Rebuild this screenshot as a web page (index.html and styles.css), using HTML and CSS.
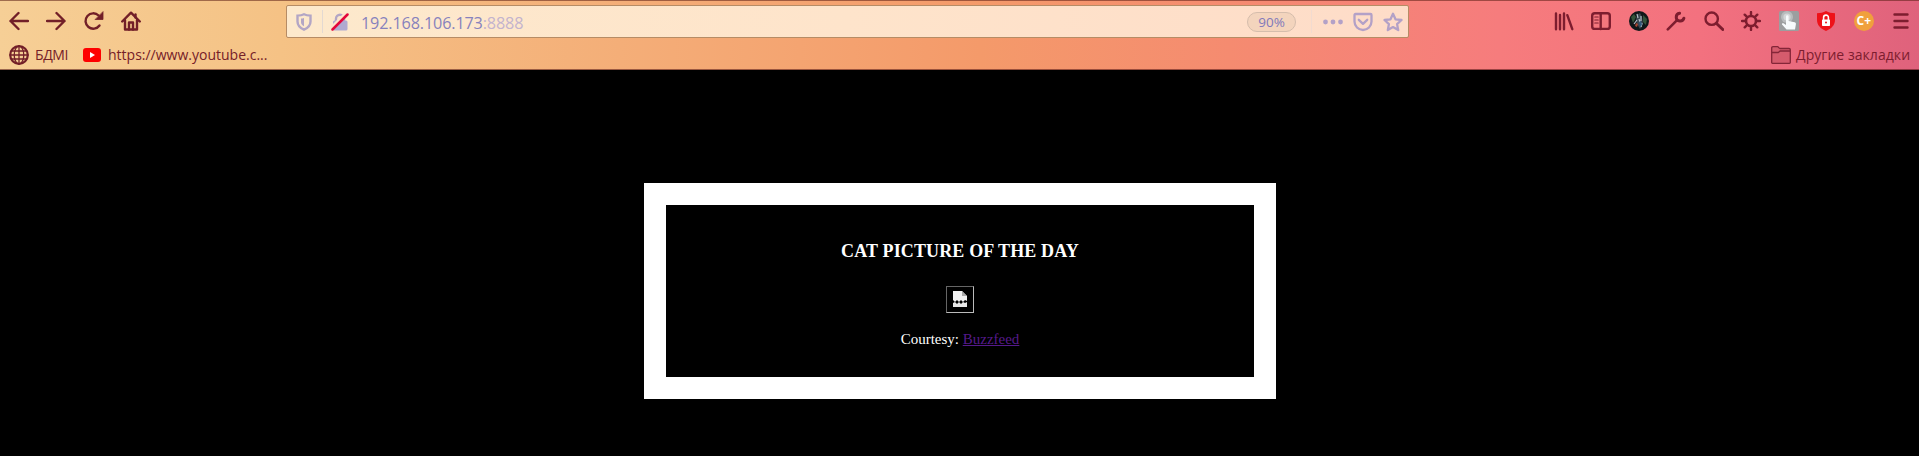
FILE: index.html
```html
<!DOCTYPE html>
<html lang="ru">
<head>
<meta charset="utf-8">
<title>Cat picture of the day</title>
<link rel="stylesheet" href="styles.css">
</head>
<body>
<header class="chrome">
  <div class="toolbar">
    <div class="buttons">
      <span class="btn"><svg class="icon line" viewBox="0 0 20 20"><path d="M19 10H1.500M9.500 2L1.500 10l8 8"/></svg></span>
      <span class="btn"><svg class="icon line" viewBox="0 0 20 20"><path d="M1 10h17.500M10.500 2l8 8-8 8"/></svg></span>
      <span class="btn"><svg class="icon line" viewBox="0 0 20 20"><path d="M15.500 14.500A7.700 7.700 0 1 1 14.600 4.500"/><path d="M19 1v7.500h-7.500z" class="solid"/></svg></span>
      <span class="btn"><svg class="icon line" viewBox="0 0 20 20"><path d="M1.200 10.500L10 1.700l8.800 8.800M4 9v9.500h12V9"/><path d="M8 18.500v-7h4v7" /><path d="M14.500 3.500v3"/></svg></span>
    </div>
    <div class="urlbar">
      <svg class="shield" viewBox="0 0 16 18"><path d="M8 1.300c2 1 4.300 1.300 6.500 1.300v5.900c0 4-2.700 6.500-6.500 8.200-3.800-1.700-6.500-4.200-6.500-8.200V2.600C3.700 2.600 6 2.300 8 1.300z" fill="none" stroke="#b3a6c5" stroke-width="2.400"/><path d="M8 5c-1 .4-2 .6-3 .6v3.600c0 1.800 1.200 3 3 4z" fill="#b3a6c5"/></svg>
      <span class="divider"></span>
      <svg class="lock" viewBox="0 0 18 18"><path d="M5 9V5.700a4 4 0 0 1 8 0V9" fill="none" stroke="#b3a6c5" stroke-width="2.400"/><rect x="2" y="7.500" width="14.500" height="10" rx="1.500" fill="#b0a9d0"/><path d="M0 15.500L15.500 0" stroke="#fde6cc" stroke-width="3.500"/><path d="M1.500 16.500l15-15" stroke="#e4063b" stroke-width="2.500" stroke-linecap="round"/></svg>
      <span class="address">192.168.106.173<span class="port">:8888</span></span>
      <span class="zoom">90%</span>
      <span class="divider faint"></span>
      <svg class="dots" viewBox="0 0 20 6"><circle cx="2.500" cy="3" r="2.400"/><circle cx="10" cy="3" r="2.400"/><circle cx="17.500" cy="3" r="2.400"/></svg>
      <svg class="page-action" viewBox="0 0 20 20"><path d="M2.500 2h15c.6 0 1 .4 1 1v6.500a8.500 8.500 0 0 1-17 0V3c0-.6.4-1 1-1z"/><path d="M5.800 7.800L10 11.800l4.200-4"/></svg>
      <svg class="page-action" viewBox="0 0 20 20"><path d="M10 1.800l2.500 5.500 6 .7-4.400 4.100 1.100 6-5.200-3-5.200 3 1.100-6L1.500 8l6-.7z"/></svg>
    </div>
    <div class="buttons extensions">
      <span class="btn"><svg class="icon line" viewBox="0 0 20 20"><path d="M2 2.500v15.800M6 4v14.300M10 2.500v15.800M13.300 4.200l5 14"/></svg></span>
      <span class="btn"><svg class="icon line" viewBox="0 0 20 20"><rect x="1.200" y="2.300" width="17.600" height="15.600" rx="2.500"/><path d="M9.700 2.500v15.500"/><path d="M3.800 6h3.400M3.800 9h3.400M3.800 12h3.400" stroke-width="1.200"/></svg></span>
      <span class="btn"><svg class="icon" viewBox="0 0 20 20"><circle cx="10" cy="10" r="10" fill="#101719"/><path d="M2 6l3-3 2 3-3 6zM14 4l4 4-1 6-3-3z" fill="#34543a"/><path d="M8 4l3-2 2 4 1 7-3 5-3-5-1-4z" fill="#3b474f"/><path d="M8 3l1 4M12 5v5M8 9l-3 4M13 12l-1 4M10 8l1 3" stroke="#b3bdc6" stroke-width="1.200"/><path d="M7 12l2 1-1 3-2-1z" fill="#a84632"/><path d="M10 11l2-1 1 4-2 2z" fill="#32597d"/></svg></span>
      <span class="btn"><svg class="icon line" viewBox="0 0 20 20"><path d="M1.800 18.300l9-9" stroke-width="2.600"/><path d="M13.600 2.300a3.900 3.900 0 1 0 4.300 4.900" stroke-width="3"/></svg></span>
      <span class="btn"><svg class="icon line" viewBox="0 0 20 20"><circle cx="7.700" cy="7.700" r="6.200"/><path d="M12.500 12.500l6.300 6" stroke-width="3"/></svg></span>
      <span class="btn"><svg class="icon line" viewBox="0 0 20 20"><circle cx="10" cy="10" r="5" stroke-width="2.600"/><path d="M10 1v3M10 16v3M1 10h3M16 10h3M3.700 3.700l2 2M14.300 14.300l2 2M3.700 16.300l2-2M14.300 5.700l2-2"/></svg></span>
      <span class="btn"><svg class="icon" viewBox="0 0 20 20"><rect width="20" height="20" rx="1.500" fill="#9c9e9f"/><circle cx="8" cy="6" r="6" fill="#b9bcbd"/><circle cx="8" cy="6" r="3.600" fill="#d5d7d8"/><path d="M7 5.500a1.300 1.300 0 0 1 2.600 0V10l6 1.300c1 .3 1.500 1 1.300 2L16 18.500H7.500L3 13.500c-.4-1 .5-1.600 1.500-1.200L7 14z" fill="#f7fbfc"/></svg></span>
      <span class="btn"><svg class="icon" viewBox="0 0 20 20"><path d="M10 0c2.700 1.700 5.700 2.200 9 2.200v6.600c0 5.500-3.700 9-9 11.200-5.300-2.200-9-5.700-9-11.200V2.200C4.300 2.200 7.300 1.700 10 0z" fill="#ee1118"/><rect x="6" y="8.500" width="8" height="6.500" rx=".7" fill="#fff"/><path d="M7.600 9V6.500a2.400 2.400 0 0 1 4.800 0V9" fill="none" stroke="#fff" stroke-width="1.600"/><circle cx="10" cy="11.600" r="1" fill="#e61218"/></svg></span>
      <span class="btn"><span class="badge">C+</span></span>
      <span class="btn"><svg class="icon line" viewBox="0 0 20 20"><path d="M3.500 3.500h13M3.500 10h13M3.500 16.500h13"/></svg></span>
    </div>
  </div>
  <nav class="bookmarks">
    <svg class="globe line" viewBox="0 0 20 20"><circle cx="10" cy="10" r="8.800" stroke-width="2.200"/><g stroke-width="1.300"><ellipse cx="10" cy="10" rx="4.800" ry="8.800"/><path d="M10 1v18M2.500 6h15M1 10h18M2.500 14h15"/></g></svg>
    <span class="label short">БДМІ</span>
    <svg class="tube" viewBox="0 0 18 14"><rect width="18" height="14" rx="3" fill="#fe0000"/><path d="M7 4l5 3-5 3z" fill="#fff"/></svg>
    <span class="label site">https://www.youtube.c...</span>
    <svg class="folder" viewBox="0 0 20 18"><path d="M.7 16.500V2c0-.8.5-1.300 1.300-1.300h4.500c1 0 1.500 1.800 2.500 1.800h9c.8 0 1.300.5 1.300 1.300v12.700c0 .5-.3.800-.8.800h-17c-.5 0-.8-.3-.8-.8zM.7 6.500h6.500l2-1.500h10"/></svg>
    <span class="label other">Другие закладки</span>
  </nav>
</header>
<main class="page">
  <section class="card">
    <h3 class="title">CAT PICTURE OF THE DAY</h3>
    <div class="picture"><svg viewBox="0 0 14 16"><path d="M0 0h9l5 5v5l-2-1-2 2-2-2-2 2-2-2-2 2-2-2z" fill="#f2f2f2"/><path d="M9 0v5h5z" fill="#aaa"/><path d="M0 12l2-1 2 2 2-2 2 2 2-2 2 1 2-1v5H0z" fill="#e8e8e8"/></svg></div>
    <p class="credit">Courtesy: <a class="link" href="#">Buzzfeed</a></p>
  </section>
</main>
</body>
</html>
```
FILE: styles.css
```css
* { box-sizing: border-box; }
body { margin: 0; height: 456px; background: #000; overflow: hidden; }
svg { display: block; flex: none; }
.chrome {
  height: 70px;
  border-top: 1px solid rgba(90, 30, 20, .55);
  border-bottom: 1px solid rgba(80, 20, 20, .55);
  background: linear-gradient(90deg, #f6cf96 0, #f5c285 280px, #f4ae78 620px, #f49a6a 980px, #f58b70 1230px, #f67c7d 1500px, #f3717f 1700px, #df627c 1919px);
  background-origin: border-box;
  font-family: "Open Sans", "Noto Sans", sans-serif;
  color: #752028;
}
.toolbar { display: flex; align-items: flex-start; height: 40px; padding-top: 4px; }
.buttons { display: flex; flex: none; width: 150px; height: 32px; }
.btn { width: 37.5px; display: flex; align-items: center; justify-content: center; }
.icon { width: 20px; height: 20px; }
.line { fill: none; stroke: #721f28; stroke-width: 2.4; stroke-linecap: round; stroke-linejoin: round; }
.solid { fill: #721f28; stroke-width: .8; }
.urlbar {
  display: flex; align-items: center; flex: none;
  width: 1123px; height: 33px; margin-left: 136px; padding-left: 9px;
  border: 1px solid #b68c65; border-radius: 2px;
  background: linear-gradient(90deg, #fde9cc, #fee4cb 50%, #fedcc8);
}
.shield { width: 16px; height: 18px; }
.divider { width: 1px; height: 23px; margin: 0 8px 0 10px; background: #e3d9d2; }
.lock { width: 18px; height: 18px; }
.address { flex: 1; margin-left: 12px; font-size: 16.2px; line-height: 22px; letter-spacing: -.14px; color: #8782bd; padding-top: 3px; }
.port { color: #c3b3ce; }
.zoom {
  width: 49px; height: 20px; border: 1px solid #d5bdac; border-radius: 10px; background: #f3d4bd;
  color: #8079bb; font-size: 13.5px; line-height: 19px; text-align: center;
}
.faint { margin: 0 11px 0 15px; background: #f2dbd0; }
.dots { width: 20px; height: 6px; fill: #b3a1c7; margin-right: 10px; }
.page-action { width: 20px; height: 20px; margin-right: 10px; fill: none; stroke: #b3a1c7; stroke-width: 2.3; stroke-linejoin: round; stroke-linecap: round; }
.page-action:last-child { margin-right: 5px; }
.extensions { width: 375px; margin-left: 136px; }
.extensions .line { stroke: #7d1d2f; }
.badge { width: 20px; height: 20px; border-radius: 50%; background: #f0a03c; color: #fff; font-size: 12px; font-weight: 700; line-height: 19px; text-align: center; }
.bookmarks { display: flex; align-items: center; height: 28px; padding: 0 9px; }
.globe { width: 20px; height: 20px; }
.label { font-size: 14px; line-height: 20px; white-space: nowrap; }
.short { width: 34px; margin: 0 14px 0 6px; letter-spacing: -.4px; }
.tube { width: 18px; height: 14px; }
.site { margin-left: 7px; }
.folder { width: 20px; height: 18px; margin-left: auto; fill: rgba(125, 29, 47, .2); stroke: #842638; stroke-width: 1.3; }
.label.other { width: 114px; margin-left: 5px; letter-spacing: .05px; color: #7d1d2f; }
.page { display: flex; justify-content: center; padding: 113px 0 0 1px; }
.card {
  width: 632px; height: 216px; border: 22px solid #fff; background: #000; color: #fff;
  display: flex; flex-direction: column; align-items: center;
  font: 15px/17px "Liberation Serif", "Times New Roman", serif;
}
.title { margin: 36px 0 0; font-size: 18px; line-height: 20px; letter-spacing: .14px; }
.picture { width: 28px; height: 27px; margin-top: 25px; border: 1px solid; border-color: #666 #bbb #bbb #666; padding: 4px 6px; }
.picture svg { width: 14px; height: 16px; }
.credit { margin: 18px 0 0; }
.link { color: #551a8b; }
```
